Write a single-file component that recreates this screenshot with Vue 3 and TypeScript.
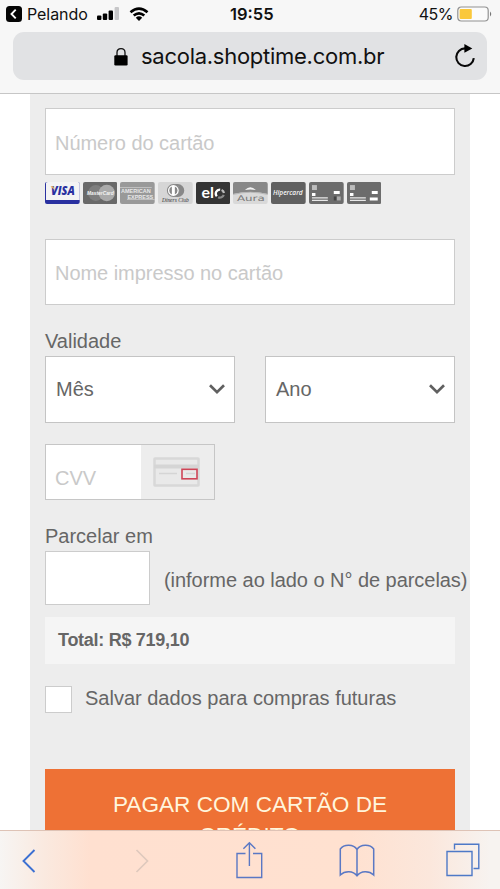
<script setup lang="ts">
import { ref } from 'vue'

const cardNumber = ref('')
const holder = ref('')
const cvv = ref('')
const installments = ref('')
const save = ref(false)
const selects: string[] = ['Mês', 'Ano']
</script>

<template>
  <div class="screen">
    <header class="browser">
      <div class="status">
        <div class="carrier">
          <svg width="16" height="16" viewBox="0 0 16 16"><rect width="16" height="16" rx="3.5" fill="#050505" /><path d="M9.7 3.7 5.5 8l4.2 4.3" fill="none" stroke="#fff" stroke-width="1.9" /></svg>
          <span class="pelando">Pelando</span>
          <svg class="signal" width="23" height="14" viewBox="0 0 23 14"><rect x="0" y="8.5" width="4.4" height="4.5" rx="1" /><rect x="5.8" y="6.5" width="4.4" height="6.5" rx="1" /><rect x="11.6" y="3.5" width="4.4" height="9.5" rx="1" /><rect x="17.6" y="0" width="4.4" height="13" rx="1" fill="#c7c7c9" /></svg>
          <svg class="wifi" width="20" height="15" viewBox="0 0 20 15"><path d="M1.5 5.3Q10-2.2 18.5 5.3M4.7 8.6Q10 4 15.3 8.6" fill="none" stroke="#000" stroke-width="2.6" /><path d="M6.8 10.7Q10 8 13.2 10.7L10 14Z" /></svg>
        </div>
        <span class="time">19:55</span>
        <div class="power">
          <span>45%</span>
          <svg width="36" height="16" viewBox="0 0 36 16"><rect x=".8" y="1" width="30.4" height="14" rx="3.5" fill="#fbfbfb" stroke="#929292" stroke-width="1.2" /><rect x="2.6" y="3" width="12.2" height="10" rx="1" fill="#fac83b" /><path d="M33 5.5Q35.5 8 33 10.5Z" fill="#777" /></svg>
        </div>
      </div>
      <div class="address">
        <svg class="lock" width="14" height="19" viewBox="0 0 14 19"><path d="M3 9V5.5C3 .2 11 .2 11 5.5V9" fill="none" stroke="#111" stroke-width="1.3" /><rect x=".3" y="8.2" width="13.3" height="10.3" rx="1.2" /></svg>
        <span class="url">sacola.shoptime.com.br</span>
        <svg class="reload" width="22" height="26" viewBox="0 0 22 26"><path d="M13 5.4H11A8.8 8.8 0 1 0 19.8 15.2" fill="none" stroke="#080808" stroke-width="2.1" /><path d="M10.4.9 18.3 5.4 10.4 9.8Z" /></svg>
      </div>
    </header>

    <main class="page">
      <form class="panel" @submit.prevent>
        <input v-model="cardNumber" class="field" placeholder="Número do cartão" />
        <div class="brands">
          <svg viewBox="0 0 35 22"><rect width="35" height="22" rx="2" fill="#2930a0" /><path d="M1 1Q1 0 3 0H33Q35 0 35 2V18H1Z" fill="#f3f3f4" /><text x="6" y="12.8" textLength="24" lengthAdjust="spacingAndGlyphs" class="visa">VISA</text><path d="M5.5 4.3H8.5L9.5 8Z" fill="#e9b45c" /></svg>
          <svg viewBox="0 0 35 22"><rect width="35" height="22" rx="2" fill="#696969" /><circle cx="13" cy="11" r="8" fill="#7e7e7e" /><circle cx="24" cy="11" r="8.3" fill="#aaa" /><text x="4" y="13.5" textLength="27" lengthAdjust="spacingAndGlyphs" class="master">MasterCard</text></svg>
          <svg viewBox="0 0 35 22"><rect width="35" height="22" rx="2" fill="#999" /><path d="M0 5.5H32M7 17.5H35" stroke="#ddd" stroke-width=".6" /><text x="1" y="10.8" textLength="30" lengthAdjust="spacingAndGlyphs" class="amex">AMERICAN</text><text x="7.5" y="16.7" textLength="26" lengthAdjust="spacingAndGlyphs" class="amex">EXPRESS</text></svg>
          <svg viewBox="0 0 35 22"><rect width="35" height="22" rx="2" fill="#d6d6d6" /><path d="M16 2H20A6.5 6.5 0 0 1 20 15H16Z" fill="#888" /><circle cx="15.5" cy="8.5" r="6" fill="#fff" stroke="#888" stroke-width="1.1" /><path d="M14 4.5V12.5A4.3 4.3 0 0 1 14 4.5M17 4.5V12.5A4.3 4.3 0 0 0 17 4.5" fill="#888" /><text x="4" y="20.2" textLength="27" lengthAdjust="spacingAndGlyphs" class="diners">Diners Club</text></svg>
          <svg viewBox="0 0 35 22"><rect width="35" height="22" rx="2" fill="#343434" /><text x="5.5" y="16" textLength="12.5" lengthAdjust="spacingAndGlyphs" class="elo">el</text><path d="M21 14.4A4.1 4.1 0 0 1 24.4 7.6" class="ring" stroke="#fff" /><path d="M25.8 7.9A4.1 4.1 0 0 1 28.2 11" class="ring" stroke="#bbb" /><path d="M28 12.9A4.1 4.1 0 0 1 22.4 15.3" class="ring" stroke="#888" /></svg>
          <svg viewBox="0 0 35 22"><rect width="35" height="22" rx="2" fill="#d9d9d9" /><path d="M0 12V2Q0 0 2 0H33Q35 0 35 2V12Q17.5 8 0 12Z" fill="#878787" /><path d="M0 12.5Q17.5 8 35 12.5" fill="none" stroke="#b8b8b8" /><path d="M12 8Q17.5 2.5 23 8Q17.5 6.7 12 8Z" fill="#f2f2f2" /><text x="4" y="19.5" textLength="28" lengthAdjust="spacingAndGlyphs" class="aura">Aura</text></svg>
          <svg viewBox="0 0 35 22"><rect width="35" height="22" rx="2" fill="#606060" /><text x="2" y="13.5" textLength="30" lengthAdjust="spacingAndGlyphs" class="hiper">Hipercard</text></svg>
          <svg viewBox="0 0 35 22"><rect width="35" height="22" rx="2" fill="#6c6c6c" /><rect x="3" y="3" width="5" height="5" fill="#bdbdbd" /><path d="M3 12.5H6.5M25 10.5H31" stroke="#fff" stroke-width="3" /><path d="M3 16H19M3 18.5H19" stroke="#e8e8e8" stroke-width="1.3" /><path d="M25 16.5H28" stroke="#444" stroke-width="4" /><path d="M28 16.5H32" stroke="#aaa" stroke-width="4" /></svg>
          <svg viewBox="0 0 35 22"><rect width="35" height="22" rx="2" fill="#6c6c6c" /><rect x="3" y="3" width="5" height="5" fill="#bdbdbd" /><path d="M3 12.5H6.5M25 10.5H31M23 17H31" stroke="#fff" stroke-width="3" /><path d="M3 16H19M3 18.5H19" stroke="#e8e8e8" stroke-width="1.3" /></svg>
        </div>
        <input v-model="holder" class="field holder" placeholder="Nome impresso no cartão" />

        <label class="label valid">Validade</label>
        <div class="dates">
          <div v-for="name in selects" :key="name" class="select">
            <span>{{ name }}</span>
            <svg width="18" height="12" viewBox="0 0 18 12"><path d="M2 2.3 9 9.2 16 2.3" fill="none" stroke="#606060" stroke-width="2.7" /></svg>
          </div>
        </div>

        <div class="cvv">
          <input v-model="cvv" placeholder="CVV" />
          <div class="hint">
            <svg width="48" height="32" viewBox="0 0 48 32"><rect x="1.5" y="2.5" width="44" height="27" rx=".5" fill="#e9e9e9" stroke="#d8d8d8" stroke-width="2.5" /><path d="M1 10.5H46" stroke="#d5d5d5" stroke-width="4" /><path d="M6 17.5H24M33 17.5H42" stroke="#d5d5d5" stroke-width="1.3" /><rect x="29" y="13.3" width="15" height="9.5" fill="none" stroke="#cf4557" stroke-width="1.6" /></svg>
          </div>
        </div>

        <label class="label parcel">Parcelar em</label>
        <div class="installments">
          <input v-model="installments" />
          <span>(informe ao lado o N° de parcelas)</span>
        </div>

        <div class="total">Total: R$ 719,10</div>
        <label class="save"><input v-model="save" type="checkbox" /><span>Salvar dados para compras futuras</span></label>
        <button class="pay">PAGAR COM CARTÃO DE CRÉDITO</button>
      </form>
    </main>

    <nav class="toolbar">
      <svg class="back" width="14" height="26" viewBox="0 0 14 26"><path d="M12.5 2 1.5 13 12.5 24" stroke="#3c70d2" stroke-width="1.9" /></svg>
      <svg class="forward" width="14" height="26" viewBox="0 0 14 26"><path d="M1.5 2 12.5 13 1.5 24" stroke="#dfc9bd" stroke-width="1.7" /></svg>
      <svg class="share" width="27" height="38" viewBox="0 0 27 38"><path d="M9.5 12.5H1V36.5H25.7V12.5H17M13.4 25V2M7.4 7.7 13.4 1.7 19.4 7.7" stroke="#5a78c4" stroke-width="1.4" /></svg>
      <svg class="book" width="36" height="34" viewBox="0 0 36 34"><path d="M18 5.5C14.5 0 5 0 1.3 5V31C6 26.5 14 26.5 18 31.8 22 26.5 30 26.5 34.7 31V5C31 0 21.5 0 18 5.5V31.8" stroke="#5a78c4" stroke-width="1.5" /></svg>
      <svg class="tabs" width="34" height="34" viewBox="0 0 34 34"><path d="M1 8.5H26V32.5H1ZM8.5 6.5V1.2H32.8V25.5H27.5" stroke="#4e79c7" stroke-width="1.4" /></svg>
    </nav>
  </div>
</template>

<style>
body { margin: 0; background: #fff; }
</style>

<style scoped>
* { box-sizing: border-box; }
.screen { width: 500px; height: 889px; display: flex; flex-direction: column; overflow: hidden; font-family: "Liberation Sans", Arial, sans-serif; color: #666; font-size: 20px; }
svg { display: block; flex: none; }
.browser { height: 94px; flex: none; background: #f7f7f7; border-bottom: 1px solid #c6c6c6; font-family: Inter, sans-serif; color: #111; }
.status { height: 32px; padding: 0 7px 4px 6px; display: grid; grid-template-columns: 224px 1fr auto; align-items: center; font-size: 16px; line-height: 20px; }
.carrier, .power { display: flex; align-items: center; }
.pelando { margin-left: 5px; width: 61px; letter-spacing: -.05px; }
.signal { margin-left: 9px; }
.wifi { margin-left: 9px; }
.time { font-weight: 600; font-size: 16.5px; letter-spacing: 0; }
.power { justify-content: flex-end; gap: 4px; letter-spacing: -.5px; }
.address { margin: 0 13px; height: 48px; border-radius: 11px; background: #e1e2e4; display: flex; align-items: center; padding: 0 11px 0 101px; }
.url { margin-left: 13px; font-size: 22px; line-height: 28px; letter-spacing: -.27px; white-space: nowrap; }
.reload { margin-left: auto; }
.page { flex: 1; min-height: 0; overflow: hidden; padding: 0 30px; }
.panel { height: 760px; padding: 14px 15px 0; background: #ededed; }
input { display: block; font: inherit; color: #666; border: 1px solid #ccc; border-radius: 0; outline: 0; background: #fff; margin: 0; }
input::placeholder { color: #c9c9c9; opacity: 1; }
.field { width: 410px; height: 67px; padding: 3px 9px 0; letter-spacing: -.04px; }
.holder { height: 66px; padding-top: 2px; }
.brands { display: flex; gap: 3px; margin: 7px 0 34px; height: 23px; }
.brands svg { width: 34.7px; height: 22px; }
.visa { font: italic 800 11.5px "Open Sans", sans-serif; fill: #2930a0; }
.master { font: italic 700 6.2px "Liberation Sans", sans-serif; fill: #f5f5f5; }
.amex { font: 700 5.6px "Liberation Sans", sans-serif; fill: #e8e8e8; }
.diners { font: italic 6.5px "Liberation Serif", serif; fill: #333; }
.elo { font: 700 16px Lato, sans-serif; fill: #fff; }
.ring { fill: none; stroke-width: 2.3; }
.aura { font: 8px "DejaVu Sans", sans-serif; fill: #777; }
.hiper { font: italic 600 8px "Open Sans", sans-serif; fill: #f5f5f5; }
.label { display: block; height: 26px; line-height: 26px; }
.valid { margin-top: 23px; margin-bottom: 2px; }
.dates { display: flex; gap: 30px; }
.select { flex: 1; height: 67px; border: 1px solid #c4c4c4; background: #fff; display: flex; align-items: center; justify-content: space-between; padding: 0 8px 1px 10px; }
.cvv { display: flex; width: 170px; height: 56px; margin-top: 21px; border: 1px solid #c6c6c6; }
.cvv input { width: 95px; border: 0; padding: 13px 9px 0; }
.hint { flex: 1; display: flex; align-items: center; padding-left: 12px; }
.parcel { margin-top: 23px; margin-bottom: 2px; }
.installments { display: flex; align-items: center; gap: 14px; white-space: nowrap; }
.installments input { width: 105px; height: 54px; flex: none; }
.installments span { padding-top: 4px; letter-spacing: -.04px; }
.total { margin-top: 12px; height: 47px; line-height: 47px; padding-left: 13px; font-size: 18px; font-weight: 700; background: #f5f5f5; letter-spacing: -.28px; }
.save { display: flex; align-items: center; gap: 13px; margin-top: 22px; height: 27px; }
.save input { appearance: none; width: 27px; height: 27px; }
.save span { padding-bottom: 2px; }
.pay { display: flex; align-items: flex-start; width: 410px; height: 100px; margin-top: 56px; padding: 20px 60px 0; border: 0; background: #ee7135; color: #fff5dc; font: 22.6px/31px "Liberation Sans", sans-serif; text-align: center; }
.toolbar { height: 59px; flex: none; display: flex; align-items: center; padding: 2px 0 0 22px; border-top: 1px solid #dec3b6; background: linear-gradient(90deg, #f7f5f3 0, #fae9df 45px, #ffe0d0 90px, #ffe1d0 350px, #fbe7dc 430px, #f7f3f0 490px); }
.toolbar path { fill: none; }
.forward { margin-left: 99px; }
.share { margin-left: 87px; margin-bottom: 3px; }
.book { margin-left: 76px; }
.tabs { margin-left: 71px; margin-bottom: 2px; }
</style>
